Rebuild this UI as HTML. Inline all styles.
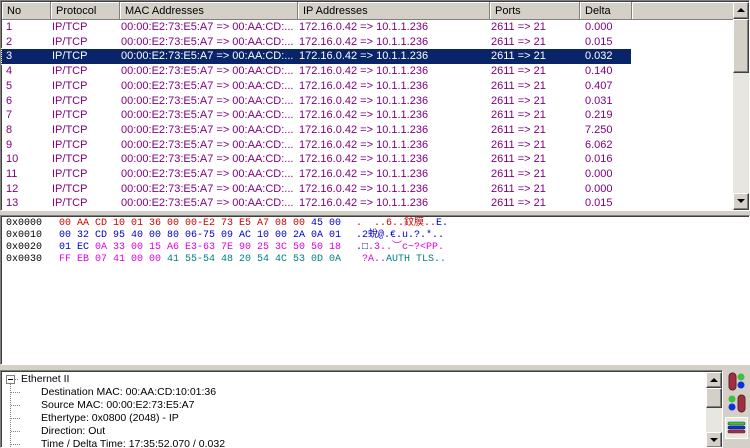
<!DOCTYPE html>
<html><head><meta charset="utf-8"><style>
*{margin:0;padding:0;box-sizing:border-box}
body{width:750px;height:448px;background:#d4d0c8;overflow:hidden;position:relative;font-family:"Liberation Sans","Noto Sans CJK SC",sans-serif;font-size:11px}
.pane{position:absolute;background:#fff;border-top:1px solid #808080;border-left:1px solid #808080;border-right:1px solid #fff;border-bottom:1px solid #fff;box-shadow:inset 1px 1px 0 #404040}
.hdr{position:absolute;top:1px;height:18px;background:#d4d0c8;border-right:1px solid #808080;border-bottom:1px solid #808080;box-shadow:inset 1px 1px 0 #fff;line-height:18px;padding-left:5px;color:#000}
.row{position:absolute;left:1px;width:629px;height:14.7px;line-height:14.7px;color:#800080}
.row span{position:absolute;white-space:nowrap}
.sel{background:#0a246a;color:#fff;outline:1px dotted #fff}
.sb{position:absolute;background:#e8e6e0}
.btn{position:absolute;width:16px;height:16px;background:#d4d0c8;border:1px solid;border-color:#fff #404040 #404040 #fff;box-shadow:inset -1px -1px 0 #808080}
.hex{position:absolute;font-family:"Liberation Mono",monospace;font-size:10px;white-space:pre;line-height:12px}
.r{color:#d00000}.b{color:#0000c0}.m{color:#e000e0}.t{color:#008080}
.tr{position:absolute;left:40px;white-space:nowrap;color:#000;font-size:10.5px}
</style></head><body>
<div class="pane" style="left:0;top:0;width:750px;height:211px;overflow:hidden">
 <div class="hdr" style="left:1px;width:49px">No</div>
 <div class="hdr" style="left:50px;width:69px">Protocol</div>
 <div class="hdr" style="left:119px;width:178px">MAC Addresses</div>
 <div class="hdr" style="left:297px;width:192px">IP Addresses</div>
 <div class="hdr" style="left:489px;width:90px">Ports</div>
 <div class="hdr" style="left:579px;width:52px">Delta</div>
 <div class="hdr" style="left:631px;width:102px"></div>
 <div id="rows"></div>
 <div class="sb" style="left:732px;top:1px;width:17px;height:208px"></div>
 <div class="btn" style="left:732px;top:1px;height:17px"><svg width="14" height="14" style="position:absolute;left:0;top:0"><path d="M3 9h8L7 5z" fill="#000"/></svg></div>
 <div class="btn" style="left:732px;top:18px;height:54px"></div>
 <div class="btn" style="left:732px;top:192px;height:17px"><svg width="14" height="14" style="position:absolute;left:0;top:0"><path d="M3 5h8L7 9z" fill="#000"/></svg></div>
</div>
<div class="pane" style="left:0;top:215px;width:750px;height:150px">
 <div class="hex" style="left:5px;top:2px;color:#000">0x0000
0x0010
0x0020
0x0030</div>
 <div class="hex" style="left:58px;top:2px"><span class="r">00 AA CD 10 01 36 00 00-E2 73 E5 A7 08 00 </span><span class="b">45 00</span>
<span class="b">00 32 CD 95 40 00 80 06-75 09 AC 10 00 2A 0A 01</span>
<span class="b">01 EC </span><span class="m">0A 33 00 15 A6 E3-63 7E 90 25 3C 50 50 18</span>
<span class="m">FF EB 07 41 00 00 </span><span class="t">41 55-54 48 20 54 4C 53 0D 0A</span></div>
 <div class="hex" style="left:355px;top:2px"><span class="r">.  ..6..鈫膜..</span><span class="b">E.</span>
<span class="b">.2蛻@.€.u.?.*..</span>
<span class="b">.□</span><span class="m">.3..︶c~?&lt;PP.</span>
<span class="m"> ?A..</span><span class="t">AUTH TLS..</span></div>
</div>
<div class="pane" style="left:0;top:370px;width:723px;height:78px;overflow:hidden">
 <svg width="120" height="78" style="position:absolute;left:0;top:0">
  <rect x="5.5" y="4.5" width="8" height="8" fill="#fff" stroke="#808080"/>
  <path d="M7 8.5h5" stroke="#000"/>
  <path d="M14 8.5h4M9.5 13v65M10 21.5h10M10 34.5h10M10 47.5h10M10 60.5h10M10 73.5h10" stroke="#808080" stroke-dasharray="1 1"/>
 </svg>
 <div class="tr" style="left:20px;top:2px">Ethernet II</div>
 <div class="tr" style="top:15px">Destination MAC: 00:AA:CD:10:01:36</div>
 <div class="tr" style="top:28px">Source MAC: 00:00:E2:73:E5:A7</div>
 <div class="tr" style="top:41px">Ethertype: 0x0800 (2048) - IP</div>
 <div class="tr" style="top:54px">Direction: Out</div>
 <div class="tr" style="top:67px">Time / Delta Time: 17:35:52.070 / 0.032</div>
 <div class="sb" style="left:705px;top:1px;width:16px;height:76px"></div>
 <div class="btn" style="left:705px;top:1px"><svg width="14" height="14" style="position:absolute"><path d="M3 9h8L7 5z" fill="#000"/></svg></div>
 <div class="btn" style="left:705px;top:17px;height:20px"></div>
 <div class="btn" style="left:705px;top:61px"><svg width="14" height="14" style="position:absolute"><path d="M3 5h8L7 9z" fill="#000"/></svg></div>
</div>
<svg width="27" height="78" style="position:absolute;left:723px;top:370px">
 <rect x="6" y="3" width="7" height="17" rx="3.5" fill="#a03040" stroke="#602030"/>
 <circle cx="18" cy="7" r="3.5" fill="#40c040"/><circle cx="18" cy="15" r="3.5" fill="#1030e0"/>
 <rect x="15" y="25" width="7" height="17" rx="3.5" fill="#a03040" stroke="#602030"/>
 <circle cx="9" cy="29" r="3.5" fill="#40c040"/><circle cx="9" cy="37" r="3.5" fill="#1030e0"/>
 <rect x="2.5" y="47.5" width="22" height="21" fill="#e8e6e0" stroke="#fff"/>
 <rect x="5" y="52" width="17" height="3" rx="1.5" fill="#40c040" stroke="#205020" stroke-width=".6"/>
 <rect x="5" y="56" width="17" height="3" rx="1.5" fill="#1030e0" stroke="#101060" stroke-width=".6"/>
 <rect x="5" y="60" width="17" height="3" rx="1.5" fill="#a03040" stroke="#602030" stroke-width=".6"/>
</svg>
<script>
var d=["0.000","0.015","0.032","0.140","0.407","0.031","0.219","7.250","6.062","0.016","0.000","0.000","0.015"],h="";
for(var i=0;i<13;i++){h+='<div class="row'+(i==2?' sel':'')+'" style="top:'+(19+i*14.7)+'px"><span style="left:4px">'+(i+1)+'</span><span style="left:50px">IP/TCP</span><span style="left:119px">00:00:E2:73:E5:A7 =&gt; 00:AA:CD:...</span><span style="left:297px">172.16.0.42 =&gt; 10.1.1.236</span><span style="left:489px">2611 =&gt; 21</span><span style="left:583px">'+d[i]+'</span></div>';}
document.getElementById("rows").innerHTML=h;
</script>
</body></html>
